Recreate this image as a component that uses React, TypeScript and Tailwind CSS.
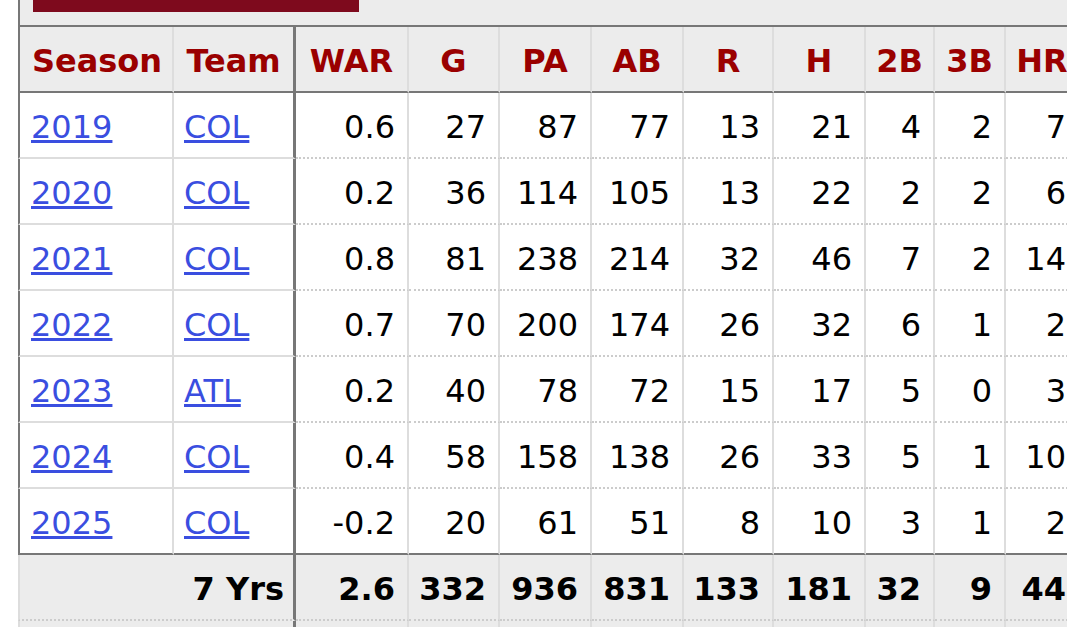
import React from "react";

type Season = {
  year: string;
  team: string;
  stats: string[];
};

const headers = ["WAR", "G", "PA", "AB", "R", "H", "2B", "3B", "HR"];

const seasons: Season[] = [
  { year: "2019", team: "COL", stats: ["0.6", "27", "87", "77", "13", "21", "4", "2", "7"] },
  { year: "2020", team: "COL", stats: ["0.2", "36", "114", "105", "13", "22", "2", "2", "6"] },
  { year: "2021", team: "COL", stats: ["0.8", "81", "238", "214", "32", "46", "7", "2", "14"] },
  { year: "2022", team: "COL", stats: ["0.7", "70", "200", "174", "26", "32", "6", "1", "2"] },
  { year: "2023", team: "ATL", stats: ["0.2", "40", "78", "72", "15", "17", "5", "0", "3"] },
  { year: "2024", team: "COL", stats: ["0.4", "58", "158", "138", "26", "33", "5", "1", "10"] },
  { year: "2025", team: "COL", stats: ["-0.2", "20", "61", "51", "8", "10", "3", "1", "2"] },
];

const totals = ["2.6", "332", "936", "831", "133", "181", "32", "9", "44"];

const gridCols =
  "grid grid-cols-[156px_122px_113px_91px_92px_92px_90px_92px_69px_71px_74px]";

const App = () => {
  return (
    <div className="h-[627px] w-[1067px] overflow-hidden bg-white font-['DejaVu_Sans','Verdana',sans-serif] text-[32px] leading-none text-black">
      {/* tab strip above the table */}
      <div className="ml-[18px] h-[25px] border-l-2 border-[#777] bg-[#ececec] pl-[13px]">
        <div className="h-[12px] w-[326px] bg-[#7e0a1d]" />
      </div>

      <div className="ml-[18px] w-[1062px] border-t-2 border-[#777]">
        {/* header */}
        <div className={`${gridCols} h-[66px] bg-[#ececec] font-bold text-[#9a0000]`}>
          <div className="flex items-center justify-center border-b-2 border-l-2 border-r-2 border-b-[#777] border-l-[#777] border-r-[#ddd] pl-[2px] pt-[3px]">
            Season
          </div>
          <div className="flex items-center justify-center border-b-2 border-r-[3px] border-[#777] pt-[3px]">
            Team
          </div>
          {headers.map((h) => (
            <div
              key={h}
              className="flex items-center justify-center border-b-2 border-r-2 border-b-[#777] border-r-[#ddd] pt-[3px]"
            >
              {h}
            </div>
          ))}
        </div>

        {/* season rows */}
        {seasons.map((s, i) => {
          const last = i === seasons.length - 1;
          return (
            <div key={s.year} className={`${gridCols} h-[66px] bg-white`}>
              <div
                className={`flex items-center border-b-2 border-l-2 border-r-2 border-l-[#777] border-r-[#ddd] pl-[11px] pt-[3px] ${
                  last ? "border-b-[#777]" : "border-b-[#ddd]"
                }`}
              >
                <a href="#" className="text-[#3a4ee0] underline">
                  {s.year}
                </a>
              </div>
              <div
                className={`flex items-center border-b-2 border-r-[3px] border-r-[#777] pl-[10px] pt-[3px] ${
                  last ? "border-b-[#777]" : "border-b-[#ddd]"
                }`}
              >
                <a href="#" className="text-[#3a4ee0] underline">
                  {s.team}
                </a>
              </div>
              {s.stats.map((v, j) => (
                <div
                  key={j}
                  className={`flex items-center justify-end border-b-2 border-r-2 border-r-[#ddd] pr-3 pt-[3px] ${
                    last ? "border-b-[#777]" : "border-b-[#ccc] [border-bottom-style:dotted]"
                  }`}
                >
                  <span>{v}</span>
                </div>
              ))}
            </div>
          );
        })}

        {/* career totals */}
        <div className={`${gridCols} h-[66px] bg-[#ececec] font-bold`}>
          <div className="col-span-2 flex items-center justify-end border-b-2 border-l-2 border-r-[3px] border-b-[#ccc] border-l-[#ddd] border-r-[#777] pr-[9px] pt-[3px] [border-bottom-style:dotted]">
            7 Yrs
          </div>
          {totals.map((v, j) => (
            <div
              key={j}
              className="flex items-center justify-end border-b-2 border-r-2 border-b-[#ccc] border-r-[#ddd] pr-3 pt-[3px] [border-bottom-style:dotted]"
            >
              <span>{v}</span>
            </div>
          ))}
        </div>

        <div className={`${gridCols} h-[20px] bg-[#ececec]`}>
          <div className="col-span-2 border-l-2 border-r-[3px] border-l-[#ddd] border-r-[#777]" />
          {totals.map((_, j) => (
            <div key={j} className="border-r-2 border-[#ddd]" />
          ))}
        </div>
      </div>
    </div>
  );
};

export default App;
